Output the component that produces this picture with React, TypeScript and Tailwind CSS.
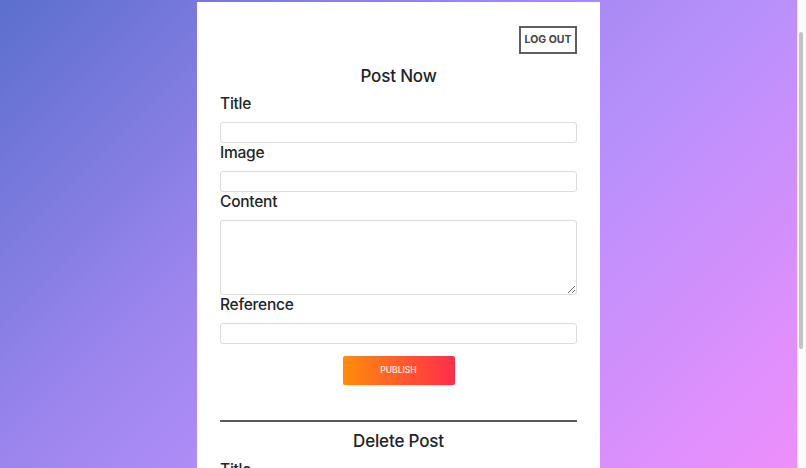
import React from "react";

const font = { fontFamily: "Inter, 'Liberation Sans', sans-serif" };

function Field({ label, area = false }: { label: string; area?: boolean }) {
  return (
    <div className="flex flex-col">
      <label className="text-[15.5px] font-medium leading-5 tracking-[-0.015em] text-[#212529]">
        {label}
      </label>
      {area ? (
        <textarea className="mt-2 h-[75px] w-full resize-y rounded-[3px] border border-[#dcdcdc] bg-white" />
      ) : (
        <input
          type="text"
          className="mt-2 h-[21px] w-full rounded-[3px] border border-[#dcdcdc] bg-white"
        />
      )}
    </div>
  );
}

function GradientButton({ children }: { children: React.ReactNode }) {
  return (
    <div className="mt-3 flex justify-center">
      <button className="h-[29px] w-[112px] rounded-[2px] bg-[linear-gradient(90deg,#ff8c0a,#ff2d4b)] text-[8.5px] font-medium text-[#fff2ea]">
        {children}
      </button>
    </div>
  );
}

export default function App() {
  return (
    <div
      style={font}
      className="flex h-screen overflow-hidden bg-[linear-gradient(135deg,#5b6fcd_0%,#9e86ef_38%,#b890fb_60%,#ef8ffd_100%)]"
    >
      <main className="flex-1 overflow-hidden">
        <div className="mx-auto mt-[2px] flex min-h-[627px] w-[403px] flex-col bg-white px-[23px] pb-8">
          <div className="flex justify-end pt-6">
            <button className="h-[28px] w-[58px] border-2 border-[#5f5f5f] text-[10.5px] font-bold text-[#444]">
              LOG OUT
            </button>
          </div>

          <h2 className="mt-2 text-center text-[17px] font-medium leading-[29px] tracking-[-0.01em] text-[#212529]">
            Post Now
          </h2>

          <div className="mt-[3px] flex flex-col">
            <Field label="Title" />
            <Field label="Image" />
            <Field label="Content" area />
            <Field label="Reference" />
          </div>

          <GradientButton>PUBLISH</GradientButton>

          <div className="mt-[35px] h-[2px] bg-[#5a5a5a]" />

          <h2 className="mt-[6px] text-center text-[17px] font-medium leading-[27px] tracking-[-0.01em] text-[#212529]">
            Delete Post
          </h2>

          <div className="mt-[5px] flex flex-col">
            <Field label="Title" />
          </div>

          <GradientButton>DELETE</GradientButton>
        </div>
      </main>

      {/* scrollbar */}
      <aside className="w-[9px] shrink-0 border-l border-[#e9e9e9] bg-[#fafafa]">
        <div className="ml-[1px] mt-[32px] h-[317px] w-[4px] rounded-full bg-[#c3c3c3]" />
      </aside>
    </div>
  );
}
